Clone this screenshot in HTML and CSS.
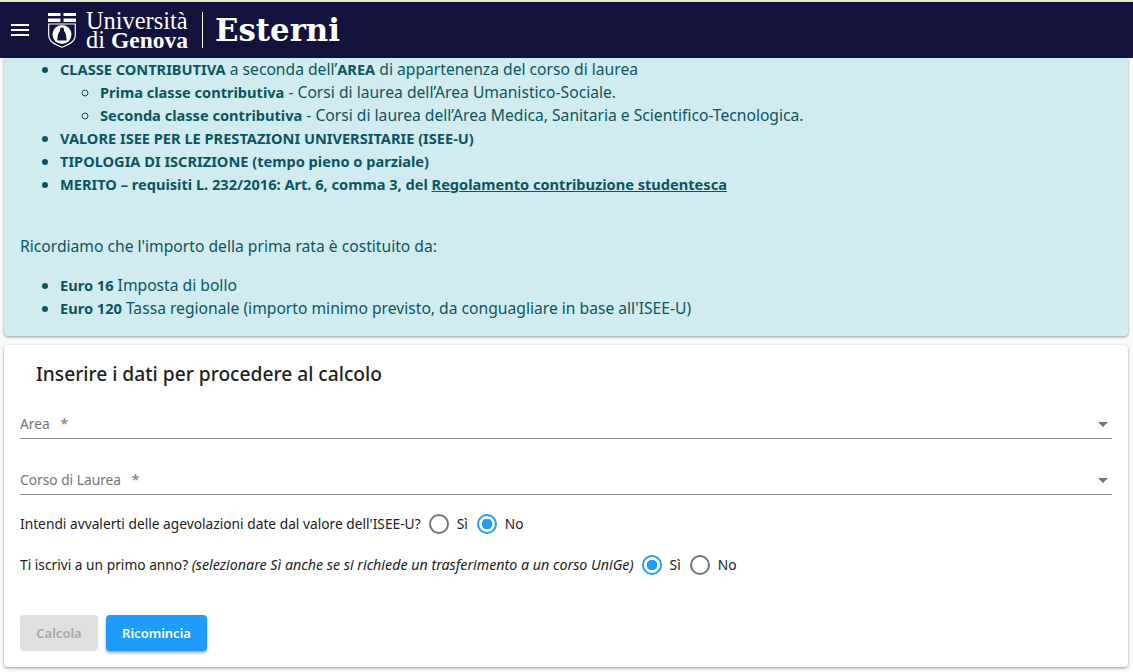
FILE: index.html
```html
<!DOCTYPE html>
<html lang="it">
<head>
<meta charset="UTF-8">
<title>Esterni</title>
<link rel="stylesheet" href="styles.css">
</head>
<body>
<div class="top-strip"></div>
<header class="app-header">
    <svg class="menu-icon" width="24" height="24" viewBox="0 0 24 24"><path d="M3 18h18v-2H3v2zm0-5h18v-2H3v2zm0-7v2h18V6H3z" fill="#fff"/></svg>
    <svg class="logo-shield" width="28" height="35" viewBox="0 0 28 35">
        <path d="M0 0h28v9H0z" fill="#fff"/>
        <path d="M12.500 0h3v9h-3zM0 3h28v2.500H0z" fill="#12123c"/>
        <path d="M.7 11h26.600v11c0 6.500-6 9.500-13.300 12.300C6.700 31.500.7 28.500.7 22z" fill="#12123c" stroke="#fff" stroke-width="1.200"/>
        <circle cx="14" cy="21.500" r="9.500" fill="#fff"/>
        <path d="M14 14.500a2 2 0 0 1 2 2v1.500c2 1.500 2.300 6 2.800 9.500h-9.600c.5-3.500.8-8 2.800-9.500v-1.500a2 2 0 0 1 2-2z" fill="#12123c"/>
    </svg>
    <div class="logo-text">
        <span>Università</span>
        <span>di <b>Genova</b></span>
    </div>
    <div class="logo-divider"></div>
    <div class="logo-section">Esterni</div>
</header>

<main class="page">
    <section class="info-panel">
        <ul class="info-list">
            <li><b>CLASSE CONTRIBUTIVA</b> a seconda dell’<b>AREA</b> di appartenenza del corso di laurea
                <ul>
                    <li><b>Prima classe contributiva</b> - Corsi di laurea dell’Area Umanistico-Sociale.</li>
                    <li><b>Seconda classe contributiva</b> - Corsi di laurea dell’Area Medica, Sanitaria e Scientifico-Tecnologica.</li>
                </ul>
            </li>
            <li><b>VALORE ISEE PER LE PRESTAZIONI UNIVERSITARIE (ISEE-U)</b></li>
            <li><b>TIPOLOGIA DI ISCRIZIONE (tempo pieno o parziale)</b></li>
            <li><b>MERITO – requisiti L. 232/2016: Art. 6, comma 3, del <a href="#">Regolamento contribuzione studentesca</a></b></li>
        </ul>
        <p class="info-note">Ricordiamo che l'importo della prima rata è costituito da:</p>
        <ul class="info-list">
            <li><b>Euro 16</b> Imposta di bollo</li>
            <li><b>Euro 120</b> Tassa regionale (importo minimo previsto, da conguagliare in base all'ISEE-U)</li>
        </ul>
    </section>

    <section class="form-card">
        <h2 class="form-title">Inserire i dati per procedere al calcolo</h2>
        <div class="select-field">
            <span class="select-label">Area&nbsp;&nbsp; *</span>
            <span class="select-arrow"></span>
        </div>
        <div class="select-field">
            <span class="select-label">Corso di Laurea&nbsp;&nbsp; *</span>
            <span class="select-arrow"></span>
        </div>
        <div class="radio-row">
            <span class="radio-question">Intendi avvalerti delle agevolazioni date dal valore dell'ISEE-U?</span>
            <span class="radio"></span><span class="radio-text">Sì</span>
            <span class="radio checked"></span><span class="radio-text">No</span>
        </div>
        <div class="radio-row">
            <span class="radio-question">Ti iscrivi a un primo anno? <i>(selezionare Sì anche se si richiede un trasferimento a un corso UniGe)</i></span>
            <span class="radio checked"></span><span class="radio-text">Sì</span>
            <span class="radio"></span><span class="radio-text">No</span>
        </div>
        <div class="form-buttons">
            <button class="btn btn-disabled" disabled>Calcola</button>
            <button class="btn btn-primary">Ricomincia</button>
        </div>
    </section>
</main>
</body>
</html>
```

FILE: styles.css
```css
html, body {
    margin: 0;
    height: 100%;
    overflow: hidden;
}

body {
    background-color: #fafafa;
    font-family: "Noto Sans", "Open Sans", sans-serif;
    font-size: 13.75px;
    color: #212121;
}

.top-strip {
    height: 2px;
    background-color: #dfe6c8;
}

.app-header {
    height: 56px;
    background-color: #12123c;
    display: flex;
    align-items: center;
    padding-left: 8px;
    color: white;
}

.logo-shield {
    margin-left: 16px;
}

.logo-text {
    display: flex;
    flex-direction: column;
    margin-left: 10px;
    font-family: "Liberation Serif", serif;
    font-size: 24.4px;
    line-height: 19px;
    width: 108px;
    flex: none;
}

.logo-text b {
    font-size: 23.5px;
}

.logo-divider {
    width: 1px;
    height: 36px;
    background-color: white;
    margin-left: 8px;
}

.logo-section {
    margin-left: 12px;
    font-family: "DejaVu Serif", serif;
    font-weight: bold;
    font-size: 30.8px;
}

.page {
    padding: 0 5px 0 4px;
}

.info-panel {
    height: 278px;
    box-sizing: border-box;
    padding: 0 16px;
    background-color: #d1ecf1;
    color: #0c5460;
    font-size: 15.65px;
    line-height: 23px;
    border-radius: 0 0 4px 4px;
    box-shadow: 0 1px 3px rgba(0, 0, 0, 0.4);
}

.info-panel b {
    font-size: 14.6px;
    font-weight: 700;
}

.info-panel a {
    color: #0c5460;
}

.info-list {
    margin: 0;
    padding-left: 40px;
}

.info-list ul {
    padding-left: 40px;
}

.info-note {
    margin: 39px 0 16px;
}

.form-card {
    margin-top: 9px;
    height: 322px;
    box-sizing: border-box;
    padding: 0 16px;
    background-color: white;
    border-radius: 4px;
    box-shadow: 0 1px 3px rgba(0, 0, 0, 0.4);
}

.form-title {
    margin: 0;
    padding: 16px 16px 0;
    font-size: 19.2px;
    font-weight: 500;
    line-height: 26px;
}

.select-field {
    display: flex;
    justify-content: space-between;
    align-items: center;
    height: 28px;
    margin-top: 23px;
    border-bottom: 1px solid #8c8c8c;
    color: #757575;
}

.select-field + .select-field {
    margin-top: 27px;
}

.select-label {
    padding-bottom: 2px;
}

.select-arrow {
    width: 0;
    height: 0;
    margin-right: 4px;
    border-left: 5px solid transparent;
    border-right: 5px solid transparent;
    border-top: 5px solid #757575;
}

.radio-row {
    display: flex;
    align-items: center;
    height: 24px;
    margin-top: 17px;
}

.radio-question {
    padding-bottom: 2px;
}

.radio-row i {
    font-size: 14.25px;
}

.radio {
    width: 20px;
    height: 20px;
    box-sizing: border-box;
    margin-left: 8px;
    border: 2px solid #757575;
    border-radius: 50%;
}

.radio.checked {
    border-color: #1f9bfa;
    background: radial-gradient(circle, #1f9bfa 0 5px, transparent 5.500px);
}

.radio-text {
    margin-left: 8px;
    margin-right: 1px;
    padding-bottom: 2px;
}

.form-buttons {
    display: flex;
    gap: 8px;
    margin-top: 38px;
}

.btn {
    height: 36px;
    padding: 0;
    border: none;
    border-radius: 4px;
    font-family: inherit;
    font-size: 13px;
    font-weight: 600;
}

.btn-disabled {
    width: 78px;
    background-color: #e0e0e0;
    color: #a6a6a6;
}

.btn-primary {
    width: 101px;
    background-color: #1f9bfa;
    color: white;
    box-shadow: 0 2px 3px rgba(0, 0, 0, 0.35);
}
```
